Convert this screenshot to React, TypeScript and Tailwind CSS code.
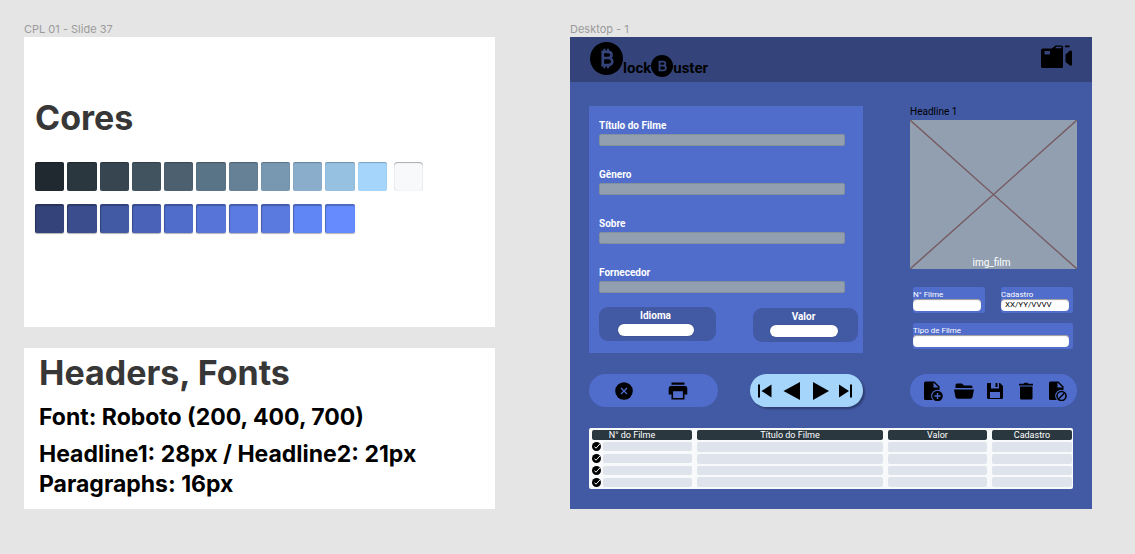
import React from "react";

const greys = [
  "bg-[#212930]", "bg-[#2b373f]", "bg-[#374551]", "bg-[#425360]", "bg-[#4d6070]", "bg-[#5a7487]",
  "bg-[#668096]", "bg-[#7898b1]", "bg-[#89adcb]", "bg-[#96c1e1]", "bg-[#a5d5fb]",
];
const blues = [
  "bg-[#34447a]", "bg-[#3b4d8d]", "bg-[#4259a4]", "bg-[#4a63b8]", "bg-[#506dcc]",
  "bg-[#5775d9]", "bg-[#5c7be2]", "bg-[#5b7ae0]", "bg-[#6085f4]", "bg-[#668bff]",
];
const fields = ["Título do Filme", "Gênero", "Sobre", "Fornecedor"];

function FrameLabel({ children }: { children: React.ReactNode }) {
  return <p className="h-4 text-[11px] leading-4 text-[#9b9b9b]">{children}</p>;
}

function Palette() {
  return (
    <section className="h-[290px] bg-white pl-[11px] pt-[60px]">
      <h1 className="text-[34px] font-bold leading-[42px] text-[#373737]">Cores</h1>
      <div className="mt-[23px] flex gap-[7px]">
        <div className="grid w-[352px] grid-cols-11 gap-[3px]">
          {greys.map((c) => (
            <div key={c} className={`h-[29px] rounded-[2px] shadow-[inset_0_1px_1px_rgba(0,0,0,0.25)] ${c}`} />
          ))}
        </div>
        <div className="h-[29px] w-[29px] rounded-[4px] bg-[#f8f9fb] shadow-[inset_0_1px_1px_rgba(0,0,0,0.3),inset_0_0_1px_rgba(0,0,0,0.2)]" />
      </div>
      <div className="mt-[13px] grid w-[352px] grid-cols-11 gap-[3px]">
        {blues.map((c) => (
          <div key={c} className={`h-[29px] rounded-[2px] shadow-[inset_1px_2px_1px_rgba(0,0,0,0.25),0_1px_1px_rgba(0,0,0,0.3)] ${c}`} />
        ))}
      </div>
    </section>
  );
}

function Typography() {
  return (
    <section className="h-[161px] whitespace-nowrap bg-white pl-[15px] pt-1 font-bold text-black">
      <h2 className="text-[34px] leading-[42px] text-[#373737]">Headers, Fonts</h2>
      <p className="mt-2 text-[23px] leading-[30px]">Font: Roboto (200, 400, 700)</p>
      <p className="mt-[7px] text-[23px] leading-[30px]">
        Headline1: 28px / Headline2: 21px
        <br />
        Paragraphs: 16px
      </p>
    </section>
  );
}

function Coin({ className, ticks }: { className: string; ticks?: boolean }) {
  return (
    <svg viewBox="0 0 32 32" className={className} aria-hidden="true">
      <circle cx="16" cy="16" r="16" fill="#000" />
      <path
        d="M12.4 9.5V22.500M11 9.500H17.500C22 9.500 22 15.500 17.500 15.500H12.400M17.500 15.500C23 15.500 23 22.500 17.500 22.500H11"
        fill="none" stroke="#34447a" strokeWidth="2.600"
      />
      {ticks && <path d="M14 6.500v3M17.500 6.500v3M14 22.500v3M17.500 22.500v3" stroke="#34447a" strokeWidth="2" />}
    </svg>
  );
}

function TopBar() {
  return (
    <header className="flex h-[45px] items-start justify-between bg-[#34447a] pl-5 pr-5 pt-[5px]">
      <div className="flex items-end text-[15px] font-bold leading-[18px] text-black" aria-label="BlockBuster">
        <Coin className="mb-[2px] size-[33px]" ticks />
        <span>lock</span>
        <Coin className="size-[22px]" />
        <span>uster</span>
      </div>
      <svg viewBox="0 0 31 23" className="mt-[3px] h-[23px] w-[31px]" aria-hidden="true">
        <path
          fillRule="evenodd"
          d="M2 3.500H11L13.500 1.200Q14.200.5 15.200.5H20.500Q22 .5 22 2V21.500Q22 23 20.500 23H2Q0 23 0 21.500V5.500Q0 3.500 2 3.500ZM3.500 6V9.500H9V6ZM14 3.200H20.500V1.800H15.500Z"
        />
        <path d="M24 .5h4.500v1.800H24zM24.500 9.500L29 5.500Q31 5 31 7V19Q31 21.500 29 20.500L24.500 17Z" />
      </svg>
    </header>
  );
}

function PillField({ label, box, input }: { label: string; box: string; input: string }) {
  return (
    <label className={`flex h-[34px] flex-col items-center rounded-[9px] bg-[#4259a4] pt-[3px] text-[10px] font-bold leading-3 text-white ${box}`}>
      {label}
      <input className={`mt-[2px] h-3 rounded-full bg-white px-2 font-normal text-black shadow-[0_0_1px_rgba(0,0,0,0.4)] outline-none ${input}`} />
    </label>
  );
}

function FilmForm() {
  return (
    <form className="h-[247px] bg-[#506dcc] pl-[10px] pr-[5px] pt-[14px]">
      <div className="mr-[13px] flex flex-col gap-[23px]">
        {fields.map((f) => (
          <label key={f} className="flex flex-col gap-[2px] text-[10px] font-bold leading-3 text-white">
            {f}
            <input className="h-3 w-full rounded-[2px] border border-[#82909c] bg-[#929fb0] px-1 font-normal text-black outline-none" />
          </label>
        ))}
      </div>
      <div className="mt-[14px] flex justify-between">
        <PillField label="Idioma" box="w-[117px] pr-1" input="w-[76px]" />
        <PillField label="Valor" box="mt-px w-[105px] pr-1" input="w-[68px]" />
      </div>
    </form>
  );
}

function SmallField({ label, value, className }: { label: string; value?: string; className?: string }) {
  return (
    <label className={`flex h-[26px] flex-col rounded-[2px] bg-[#506dcc] pr-1 pt-[3px] text-[8px] leading-[9px] text-white ${className ?? ""}`}>
      {label}
      <input
        defaultValue={value}
        className="h-3 w-full rounded-[4px] bg-white px-1 text-[8px] leading-3 text-black shadow-[inset_0_1px_1px_rgba(0,0,0,0.4)] outline-none"
      />
    </label>
  );
}

function Poster() {
  return (
    <aside>
      <h3 className="h-[14px] text-[10px] leading-3 text-black">Headline 1</h3>
      <div className="grid h-[149px] bg-[#929fb0]">
        <svg viewBox="0 0 167 149" preserveAspectRatio="none" className="h-[149px] w-full [grid-area:1/1]" aria-hidden="true">
          <path d="M0 0L167 149M167 0L0 149" stroke="#765b60" strokeWidth="1.400" />
        </svg>
        <span className="self-end pr-1 text-center text-[10px] leading-3 text-white [grid-area:1/1]">img_film</span>
      </div>
      <form className="ml-[3px] mr-1 mt-[18px] grid grid-cols-2 gap-x-4 gap-y-[10px]">
        <SmallField label="N° Filme" />
        <SmallField label="Cadastro" value="XX/YY/VVVV" />
        <SmallField label="Tipo de Filme" className="col-span-2" />
      </form>
    </aside>
  );
}

function IconButton({ label, children }: { label: string; children: React.ReactNode }) {
  return (
    <button type="button" aria-label={label} className="block cursor-pointer">
      <svg viewBox="0 0 20 20" className="size-5" fill="#000" aria-hidden="true">
        {children}
      </svg>
    </button>
  );
}

function Toolbars() {
  return (
    <>
      <div className="flex justify-between">
        <div className="flex h-[33px] w-[129px] items-center justify-center gap-[34px] rounded-full bg-[#506dcc] pr-[5px]">
          <IconButton label="Cancelar">
            <circle cx="10" cy="10" r="8.800" />
            <path d="M7 7l6 6M13 7l-6 6" stroke="#506dcc" strokeWidth="1.300" />
          </IconButton>
          <IconButton label="Imprimir">
            <path d="M3.500 1.500h13v2.200h-13zM3 5h14q2.300 0 2.300 2.300v6.200h-3.500V10H4.200v3.500H.7V7.300Q.7 5 3 5Z" />
            <path d="M4.300 9.500h11.400v8.200H4.300z" fill="#506dcc" stroke="#000" strokeWidth="1.600" />
          </IconButton>
        </div>
        <div className="flex h-[33px] w-[113px] items-center justify-center gap-[7px] rounded-full bg-[#a5d5fb] pr-[2px] shadow-[2px_2px_2px_rgba(0,0,0,0.3)]">
          <IconButton label="Primeiro">
            <path d="M3 3.500h2v13H3zM16.500 3.500v13L6.500 10z" />
          </IconButton>
          <IconButton label="Anterior">
            <path d="M18 1v18L1.500 10z" />
          </IconButton>
          <IconButton label="Próximo">
            <path d="M4 1v18l16-9z" />
          </IconButton>
          <IconButton label="Último">
            <path d="M3 3.500v13L13 10zM14 3.500h2v13h-2z" />
          </IconButton>
        </div>
      </div>
      <div className="flex h-[33px] items-center justify-center gap-[11px] rounded-full bg-[#506dcc] pl-[3px]">
        <IconButton label="Novo">
          <path d="M2.500.5h9l5 5v13.500h-14q-1.500 0-1.500-1.500V2Q1 .5 2.500.5Z" />
          <path d="M10.500 1.500v5h5z" fill="#506dcc" />
          <circle cx="14.500" cy="15" r="6.300" fill="#506dcc" />
          <circle cx="14.500" cy="15" r="5.300" />
          <path d="M14.500 12v6M11.500 15h6" stroke="#506dcc" strokeWidth="1.400" />
        </IconButton>
        <IconButton label="Abrir">
          <path d="M1.500 7V4q0-1.500 1.500-1.500h5l2 2h7q1.500 0 1.500 1.500v1zM0 8.500h20L18.500 16q-.3 1.800-2 1.800h-13q-1.700 0-2-1.800z" />
        </IconButton>
        <IconButton label="Salvar">
          <path fillRule="evenodd" d="M2.500 2H15l3 3v11.500q0 1.500-1.500 1.500h-13Q2 18 2 16.500v-14zM6 2v5.500h8V2h-1.500v4h-2V2zM5 11v6h10v-6z" />
        </IconButton>
        <IconButton label="Excluir">
          <path d="M3 2.800h4.500l1-1h3l1 1H17v1.700H3zM4 5.500h12.500V17q0 1.500-1.500 1.500H5.500Q4 18.500 4 17z" />
        </IconButton>
        <IconButton label="Descartar">
          <path d="M3.500.5h8l5 5v13.500h-13Q2 19 2 17.500V2Q2 .5 3.500.5Z" />
          <path d="M10.500 1.500v5h5z" fill="#506dcc" />
          <circle cx="14.500" cy="15" r="6.300" fill="#506dcc" />
          <circle cx="14.500" cy="15" r="4.500" fill="none" stroke="#000" strokeWidth="1.600" />
          <path d="M11.500 18l6-6" stroke="#000" strokeWidth="1.400" />
        </IconButton>
      </div>
    </>
  );
}

function FilmTable() {
  const head = "h-[10px] rounded-[2px] bg-[#2b373f] p-0 font-normal";
  const cell = "h-[9px] rounded-[2px] bg-[#dfe3eb] p-0";
  return (
    <div className="mr-1 rounded-[2px] bg-[#f8f9fb]">
      <table className="-ml-[2px] h-[61px] w-[calc(100%+6px)] table-fixed border-separate border-spacing-x-[5px] border-spacing-y-[2px] text-[9px] leading-[9px] text-white">
        <thead>
          <tr>
            <th className={`w-[100px] ${head}`}><span className="mr-5">N° do Filme</span></th>
            <th className={head}>Título do Filme</th>
            <th className={`w-[99px] ${head}`}>Valor</th>
            <th className={`w-[80px] ${head}`}>Cadastro</th>
          </tr>
        </thead>
        <tbody>
          {[1, 2, 3, 4].map((n) => (
            <tr key={n}>
              <td className="h-[9px] p-0">
                <div className="flex items-stretch gap-[2px]">
                  <label className="grid size-[9px]">
                    <input type="checkbox" defaultChecked aria-label={`Filme ${n}`} className="size-[9px] appearance-none rounded-full bg-black [grid-area:1/1]" />
                    <svg viewBox="0 0 9 9" className="pointer-events-none size-[9px] overflow-visible [grid-area:1/1]" aria-hidden="true">
                      <path d="M2.500 4.600L4 6.200L8.500 1.300" fill="none" stroke="#f8f9fb" strokeWidth="1" />
                    </svg>
                  </label>
                  <div className="flex-1 rounded-[2px] bg-[#dfe3eb]" />
                </div>
              </td>
              <td className={cell} />
              <td className={cell} />
              <td className={cell} />
            </tr>
          ))}
        </tbody>
      </table>
    </div>
  );
}

export default function App() {
  return (
    <main className="grid min-h-screen grid-cols-[471fr_522fr] content-start gap-x-[75px] bg-[#e5e5e5] pb-11 pl-6 pr-[43px] pt-[21px] font-['Inter',sans-serif]">
      <div>
        <FrameLabel>CPL 01 - Slide 37</FrameLabel>
        <Palette />
        <div className="h-[21px]" />
        <Typography />
      </div>
      <div>
        <FrameLabel>Desktop - 1</FrameLabel>
        <div className="bg-[#4259a4] font-['Roboto',sans-serif]">
          <TopBar />
          <div className="grid grid-cols-[274fr_167fr] gap-x-[47px] gap-y-[21px] pb-[20px] pl-[19px] pr-[15px] pt-6">
            <FilmForm />
            <Poster />
            <Toolbars />
            <div className="col-span-2">
              <FilmTable />
            </div>
          </div>
        </div>
      </div>
    </main>
  );
}
